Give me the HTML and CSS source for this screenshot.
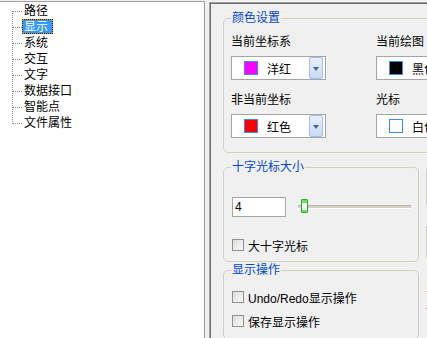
FILE: index.html
```html
<!DOCTYPE html>
<html lang="zh-CN">
<head>
  <meta charset="UTF-8" />
  <title>选项</title>
  <link rel="stylesheet" href="styles.css">
</head>
<body>
  <div class="tree">
    <ul class="tree-list">
      <li><span>路径</span></li>
      <li class="selected"><span>显示</span></li>
      <li><span>系统</span></li>
      <li><span>交互</span></li>
      <li><span>文字</span></li>
      <li><span>数据接口</span></li>
      <li><span>智能点</span></li>
      <li><span>文件属性</span></li>
    </ul>
  </div>

  <div class="panel">
    <fieldset class="group group-colors">
      <legend>颜色设置</legend>
      <div class="color-grid">
        <div class="field">
          <div class="label">当前坐标系</div>
          <div class="combo"><i class="swatch magenta"></i><span>洋红</span><b class="drop"></b></div>
        </div>
        <div class="field">
          <div class="label">当前绘图</div>
          <div class="combo"><i class="swatch black"></i><span>黑色</span><b class="drop"></b></div>
        </div>
        <div class="field">
          <div class="label">非当前坐标</div>
          <div class="combo"><i class="swatch red"></i><span>红色</span><b class="drop"></b></div>
        </div>
        <div class="field">
          <div class="label">光标</div>
          <div class="combo"><i class="swatch white"></i><span>白色</span><b class="drop"></b></div>
        </div>
      </div>
    </fieldset>

    <div class="lower">
      <div class="lower-left">
        <fieldset class="group group-cross">
          <legend>十字光标大小</legend>
          <div class="size-row">
            <div class="textbox">4</div>
            <div class="slider">
              <div class="track"></div>
              <div class="thumb"></div>
            </div>
          </div>
          <label class="check"><i class="box"></i>大十字光标</label>
        </fieldset>

        <fieldset class="group group-ops">
          <legend>显示操作</legend>
          <label class="check"><i class="box"></i>Undo/Redo显示操作</label>
          <label class="check"><i class="box"></i>保存显示操作</label>
        </fieldset>
      </div>

      <div class="lower-right">
        <div class="side-box one"></div>
        <div class="side-box two"></div>
        <div class="side-lines">
          <div>三维</div>
          <div>显示</div>
        </div>
      </div>
    </div>
  </div>
</body>
</html>
```

FILE: styles.css
```css
/* ── BASE ───────────────────────────────────────────── */
* { margin: 0; padding: 0; box-sizing: border-box; }
html, body { width: 427px; height: 338px; overflow: hidden; }
body {
  display: flex;
  align-items: flex-start;
  background: #f0f0f0;
  font-family: "Liberation Sans", "Noto Sans CJK SC", sans-serif;
  font-size: 12px;
  color: #000;
}

/* ── TREE ───────────────────────────────────────────── */
.tree {
  flex: none;
  width: 205px;
  height: 337px;
  margin-top: 1px;
  background: #fff;
  border-top: 1px solid #a0a0a0;
  border-right: 1px solid #a0a0a0;
  padding-top: 1px;
}
.tree-list {
  list-style: none;
  position: relative;
}
.tree-list::before {
  content: "";
  position: absolute;
  left: 12px;
  top: 8px;
  height: 113px;
  border-left: 1px dotted #888;
}
.tree-list li {
  position: relative;
  height: 16px;
  padding-left: 22px;
  line-height: 14px;
}
.tree-list li::before {
  content: "";
  position: absolute;
  left: 13px;
  top: 8px;
  width: 9px;
  border-top: 1px dotted #888;
}
.tree-list li span {
  display: inline-block;
  height: 16px;
  padding: 0 4px 0 1px;
  border: 1px solid transparent;
}
.tree-list li.selected span {
  height: 15px;
  color: #fff;
  border: 1px dotted #1a1a1a;
  background: linear-gradient(#3399ff, #3399ff) padding-box, #e39a3b border-box;
}

/* ── RIGHT PANEL ────────────────────────────────────── */
.panel {
  flex: none;
  width: 420px;
  height: 336px;
  margin: 2px 0 0 4px;
  border-top: 1px solid #a0a0a0;
  border-left: 1px solid #a0a0a0;
  box-shadow: inset 1px 1px #696969;
  padding: 8px 0 0 13px;
}

/* ── GROUP BOXES ────────────────────────────────────── */
.group {
  border: 1px solid #d0d0bf;
  border-radius: 5px;
  padding: 0 7px;
  min-width: 0;
}
.group legend {
  padding: 0 1px;
  line-height: 15px;
  color: #0046d5;
}

.group-colors {
  width: 400px;
  padding-top: 8px;
  padding-bottom: 14px;
}
.color-grid {
  display: grid;
  grid-template-columns: 145px 145px;
  row-gap: 12px;
}
.label {
  line-height: 16px;
  margin-bottom: 6px;
}
.combo {
  display: flex;
  align-items: center;
  width: 95px;
  height: 24px;
  padding: 0 2px 0 12px;
  background: #fff;
  border: 1px solid #a5a5a5;
}
.swatch {
  flex: none;
  width: 14px;
  height: 14px;
  margin-right: 9px;
  border: 1px solid #3c8ce0;
}
.swatch.magenta { background: #ff00ff; }
.swatch.black   { background: #000; }
.swatch.red     { background: #ff0000; }
.swatch.white   { background: #fff; }
.drop {
  margin-left: auto;
  width: 14px;
  height: 22px;
  border: 1px solid #a9c0ef;
  border-radius: 2px;
  background: linear-gradient(#e6eefc, #c9daf8);
  position: relative;
}
.drop::after {
  content: "";
  position: absolute;
  left: 3px;
  top: 9px;
  border-left: 3.5px solid transparent;
  border-right: 3.5px solid transparent;
  border-top: 4px solid #4d6185;
}

/* ── LOWER GROUPS ───────────────────────────────────── */
.lower {
  display: flex;
  gap: 7px;
}
.lower-left { flex: none; width: 196px; }

.group-cross {
  margin-top: 7px;
  padding-top: 22px;
  padding-bottom: 8px;
}
.size-row {
  display: flex;
  align-items: center;
  height: 20px;
}
.textbox {
  width: 54px;
  height: 20px;
  margin-left: 1px;
  padding-left: 2px;
  line-height: 18px;
  background: #fff;
  border: 1px solid #a5a5a5;
}
.slider {
  position: relative;
  width: 113px;
  height: 20px;
  margin-left: 12px;
}
.track {
  position: absolute;
  left: 0;
  right: 0;
  top: 8px;
  height: 4px;
  background: #d3d0c3;
  border-bottom: 1px solid #fff;
  border-top: 1px solid #b8b5a8;
}
.thumb {
  position: absolute;
  left: 3px;
  top: 2px;
  width: 7px;
  height: 14px;
  border: 1px solid #2aa52a;
  border-radius: 1px;
  background: linear-gradient(#6ce46c 0 3px, #f4f4f4 3px 10px, #6ce46c 10px);
}

.check {
  display: flex;
  align-items: center;
  height: 16px;
  margin-left: 1px;
}
.check .box {
  flex: none;
  width: 12px;
  height: 12px;
  margin-right: 4px;
  border: 1px solid #8e8f8f;
  background: linear-gradient(135deg, #dcdcd7, #fafafa);
}
.group-cross .check { margin-top: 20px; }

.group-ops {
  margin-top: 1px;
  padding-top: 11px;
  padding-bottom: 10px;
}
.group-ops .check + .check { margin-top: 8px; }

.lower-right { flex: none; width: 40px; }
.side-box {
  border: 1px solid #d0d0bf;
  background: #f0f0f0;
}
.side-box.one { margin-top: 16px; height: 36px; }
.side-box.two { margin-top: 21px; height: 32px; }
.side-lines {
  margin-top: 22px;
  line-height: 17px;
}
```
